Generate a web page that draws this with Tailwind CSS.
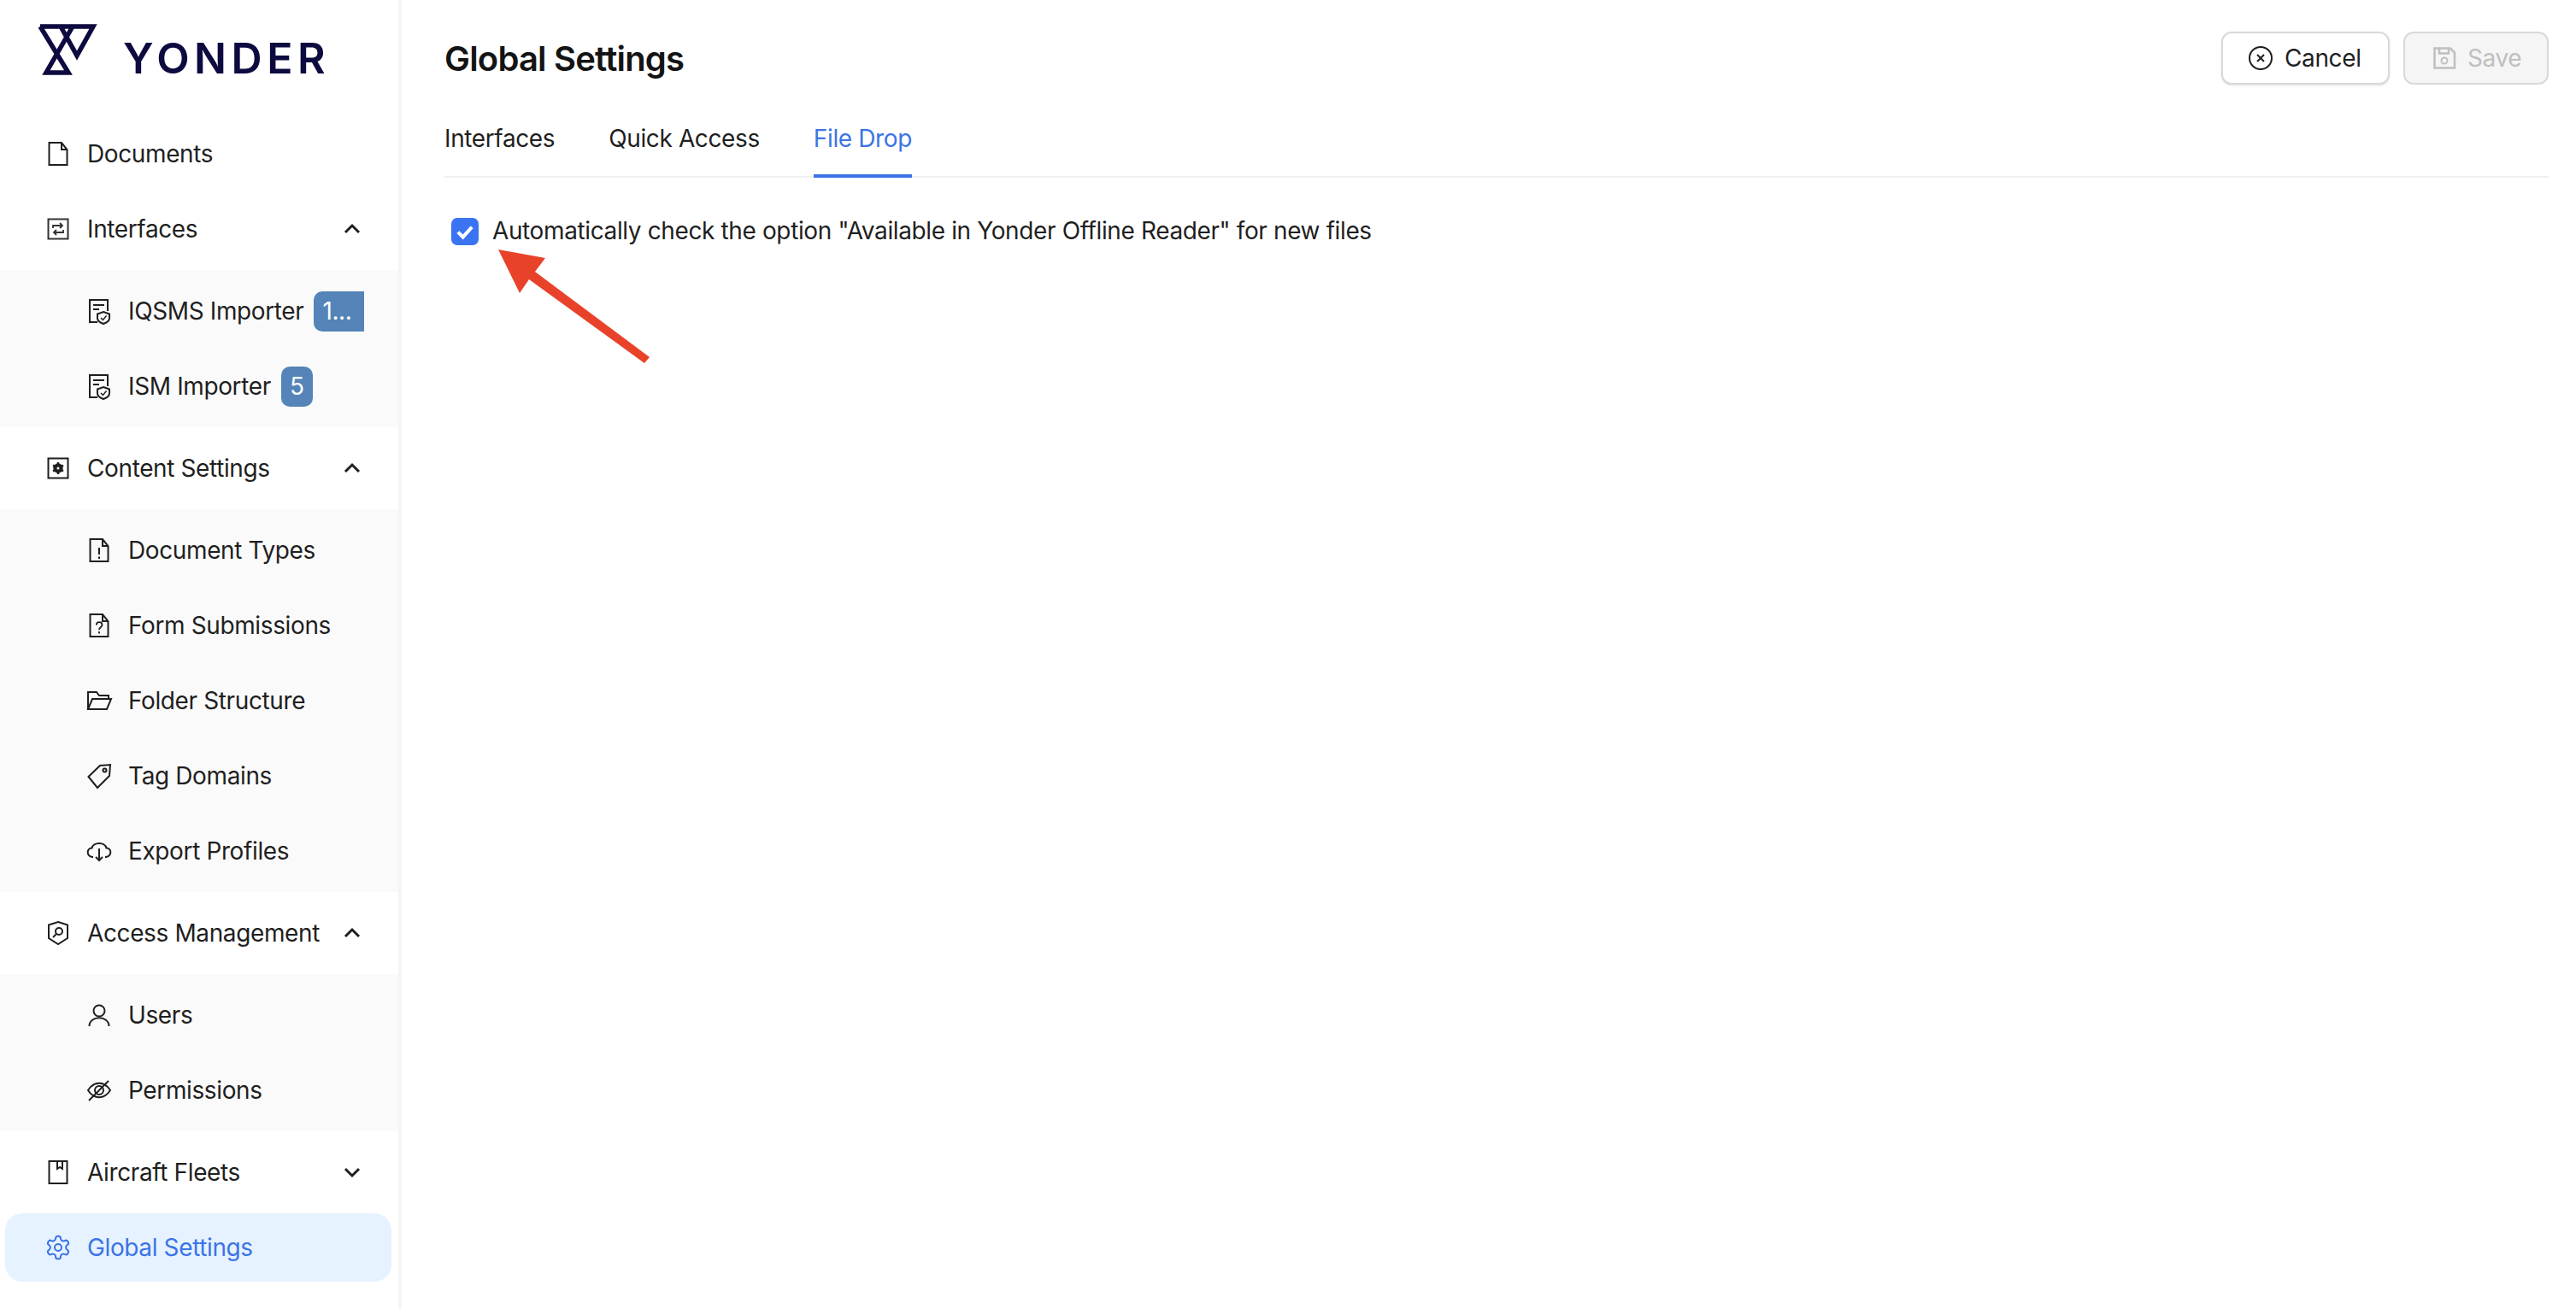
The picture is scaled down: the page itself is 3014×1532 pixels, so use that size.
<!DOCTYPE html>
<html lang="en">
<head>
  <meta charset="UTF-8" />
  <title>Global Settings</title>
  <script src="https://cdn.jsdelivr.net/npm/@tailwindcss/browser@4"></script>
</head>
<body class="bg-white font-[Inter,sans-serif] text-[28px] tracking-[-0.38px] text-[#1f1f1f]">
  <div class="relative flex h-[1532px] w-[3014px] overflow-hidden">

    <!-- sidebar -->
    <aside class="w-[470px] shrink-0 border-r-4 border-[#f5f5f5]">
      <div class="flex h-[140px] items-start pl-[44px] pt-[28px]">
        <svg class="h-[60px] w-[70px]" viewBox="0 0 70 60" fill="none" stroke="#0c0a3e" stroke-width="5.500">
          <path d="M3 3H65L46 37L27 3" />
          <path d="M3 3L36 57H10L41 3" />
        </svg>
        <span class="ml-[30px] mt-[15px] text-[50px] leading-[50px] font-semibold tracking-[5.500px] text-[#0c0a3e]">YONDER</span>
      </div>

      <nav class="flex flex-col gap-2">
        <a class="flex h-20 items-center pl-[52px]">
          <svg class="mr-[18px] size-8" viewBox="0 0 32 32" fill="none" stroke="#1f1f1f" stroke-width="2"><path d="M5.5 3H20l6.5 8v18h-21z" /><path d="M20 3v8h6.5" /></svg>
          Documents
        </a>

        <a class="flex h-20 items-center pl-[52px] pr-[40px]">
          <svg class="mr-[18px] size-8" viewBox="0 0 32 32" fill="none" stroke="#333" stroke-width="2"><rect x="4.5" y="4.500" width="23" height="23" /><path d="M10 15v-3h11M18 9l3 3-3 3M22 17v3H11M14 23l-3-3 3-3" stroke-width="1.800" /></svg>
          Interfaces
          <svg class="ml-auto size-7" viewBox="0 0 28 28" fill="none" stroke="#1f1f1f" stroke-width="3"><path d="M6 18l8-8 8 8" /></svg>
        </a>

        <div class="flex flex-col gap-2 bg-[#fafafa] py-2">
          <a class="flex h-20 items-center pl-[100px] pr-[40px]">
            <svg class="mr-[18px] size-8 shrink-0" viewBox="0 0 32 32" fill="none" stroke="#1f1f1f" stroke-width="2"><path d="M14 29H5V3h21v13" /><path d="M9 9h13M9 14h7" /><path d="M21 17l7 2.500v5c0 3-3 5-7 6.500-4-1.500-7-3.500-7-6.500v-5z" fill="#fafafa" /><path d="M18 24l2.500 2.500 4-5" stroke-width="1.500" /></svg>
            <span class="whitespace-nowrap">IQSMS Importer</span>
            <span class="ml-3 flex h-[47px] w-[59px] shrink-0 items-center rounded-l-[10px] bg-[#5484b8] pl-[10px] text-white">1...</span>
          </a>
          <a class="flex h-20 items-center pl-[100px]">
            <svg class="mr-[18px] size-8 shrink-0" viewBox="0 0 32 32" fill="none" stroke="#1f1f1f" stroke-width="2"><path d="M14 29H5V3h21v13" /><path d="M9 9h13M9 14h7" /><path d="M21 17l7 2.500v5c0 3-3 5-7 6.500-4-1.500-7-3.500-7-6.500v-5z" fill="#fafafa" /><path d="M18 24l2.500 2.500 4-5" stroke-width="1.500" /></svg>
            <span class="whitespace-nowrap">ISM Importer</span>
            <span class="ml-3 flex h-[47px] w-[37px] shrink-0 items-center justify-center rounded-[10px] bg-[#5484b8] text-white">5</span>
          </a>
        </div>

        <a class="flex h-20 items-center pl-[52px] pr-[40px]">
          <svg class="mr-[18px] size-8" viewBox="0 0 32 32" fill="none" stroke="#1f1f1f" stroke-width="2"><rect x="4.500" y="4.500" width="23" height="23" /><circle cx="16" cy="16" r="4" stroke-width="3.500" /><path d="M16 9v14M10 12.500l12 7M22 12.500l-12 7" stroke-width="2.500" /><circle cx="16" cy="16" r="1.500" fill="#fff" stroke="none" /></svg>
          Content Settings
          <svg class="ml-auto size-7" viewBox="0 0 28 28" fill="none" stroke="#1f1f1f" stroke-width="3"><path d="M6 18l8-8 8 8" /></svg>
        </a>

        <div class="flex flex-col gap-2 bg-[#fafafa] py-2">
          <a class="flex h-20 items-center pl-[100px]">
            <svg class="mr-[18px] size-8" viewBox="0 0 32 32" fill="none" stroke="#1f1f1f" stroke-width="2"><path d="M5.500 3H20l6.500 8v18h-21z" /><path d="M20 3v8h6.500" /><path d="M16 13v8M16 23.500v2.500" /></svg>
            Document Types
          </a>
          <a class="flex h-20 items-center pl-[100px]">
            <svg class="mr-[18px] size-8" viewBox="0 0 32 32" fill="none" stroke="#1f1f1f" stroke-width="2"><path d="M5.500 3H20l6.500 8v18h-21z" /><path d="M20 3v8h6.500" /><path d="M12.800 15.500c0-4.500 6.700-4.500 6.700 0 0 2.500-3.500 2.500-3.500 5.500M16 23v2.500" stroke-width="1.800" /></svg>
            Form Submissions
          </a>
          <a class="flex h-20 items-center pl-[100px]">
            <svg class="mr-[18px] size-8" viewBox="0 0 32 32" fill="none" stroke="#1f1f1f" stroke-width="2"><path d="M3 26V6h10l3 4h11v4" /><path d="M3 26h22l5-12H8z" /></svg>
            Folder Structure
          </a>
          <a class="flex h-20 items-center pl-[100px]">
            <svg class="mr-[18px] size-8" viewBox="0 0 32 32" fill="none" stroke="#1f1f1f" stroke-width="2"><path d="M3.500 17L17 4l12-1-1 13-14 14z" /><circle cx="22.500" cy="9.500" r="2" /></svg>
            Tag Domains
          </a>
          <a class="flex h-20 items-center pl-[100px]">
            <svg class="mr-[18px] size-8" viewBox="0 0 32 32" fill="none" stroke="#1f1f1f" stroke-width="2"><path d="M9 23H8C1 22 1 13 7.500 12.500 9 5 23 5 24.500 12.500 31 13 31 22 24 23h-1" /><path d="M16 13v14M12 23l4 4 4-4" /></svg>
            Export Profiles
          </a>
        </div>

        <a class="flex h-20 items-center pl-[52px] pr-[40px]">
          <svg class="mr-[18px] size-8" viewBox="0 0 32 32" fill="none" stroke="#1f1f1f" stroke-width="2"><path d="M16 3l11 3.500V22l-11 7-11-7V6.500z" /><circle cx="17" cy="14" r="4" /><path d="M14 17l-4 4" /></svg>
          Access Management
          <svg class="ml-auto size-7" viewBox="0 0 28 28" fill="none" stroke="#1f1f1f" stroke-width="3"><path d="M6 18l8-8 8 8" /></svg>
        </a>

        <div class="flex flex-col gap-2 bg-[#fafafa] py-2">
          <a class="flex h-20 items-center pl-[100px]">
            <svg class="mr-[18px] size-8" viewBox="0 0 32 32" fill="none" stroke="#1f1f1f" stroke-width="2"><circle cx="16" cy="11" r="6.500" /><path d="M4.500 29c0-13 23-13 23 0" /></svg>
            Users
          </a>
          <a class="flex h-20 items-center pl-[100px]">
            <svg class="mr-[18px] size-8" viewBox="0 0 32 32" fill="none" stroke="#1f1f1f" stroke-width="2"><path d="M3 16c7-11 19-11 26 0-7 11-19 11-26 0z" /><circle cx="16" cy="16" r="5" /><path d="M4 28L27 5" /></svg>
            Permissions
          </a>
        </div>

        <a class="flex h-20 items-center pl-[52px] pr-[40px]">
          <svg class="mr-[18px] size-8" viewBox="0 0 32 32" fill="none" stroke="#1f1f1f" stroke-width="2"><rect x="5.500" y="3" width="21" height="26" /><path d="M15 3v9l3-2 3 2V3" /></svg>
          Aircraft Fleets
          <svg class="ml-auto size-7" viewBox="0 0 28 28" fill="none" stroke="#1f1f1f" stroke-width="3"><path d="M6 10l8 8 8-8" /></svg>
        </a>

        <a class="ml-[6px] mr-2 flex h-20 items-center rounded-[20px] bg-[#e6f2ff] pl-[46px] text-[#3b74e6]">
          <svg class="mr-[18px] size-8" viewBox="0 0 24 24" fill="none" stroke="#3b74e6" stroke-width="1.500"><path d="M12.220 2h-.44a2 2 0 0 0-2 2v.18a2 2 0 0 1-1 1.730l-.43.250a2 2 0 0 1-2 0l-.15-.08a2 2 0 0 0-2.730.730l-.22.380a2 2 0 0 0 .730 2.730l.15.1a2 2 0 0 1 1 1.720v.510a2 2 0 0 1-1 1.740l-.15.090a2 2 0 0 0-.730 2.730l.22.380a2 2 0 0 0 2.730.730l.15-.08a2 2 0 0 1 2 0l.43.250a2 2 0 0 1 1 1.730V20a2 2 0 0 0 2 2h.44a2 2 0 0 0 2-2v-.18a2 2 0 0 1 1-1.730l.43-.25a2 2 0 0 1 2 0l.15.08a2 2 0 0 0 2.730-.73l.22-.39a2 2 0 0 0-.73-2.730l-.15-.08a2 2 0 0 1-1-1.740v-.5a2 2 0 0 1 1-1.740l.15-.09a2 2 0 0 0 .73-2.730l-.22-.38a2 2 0 0 0-2.730-.73l-.15.08a2 2 0 0 1-2 0l-.43-.25a2 2 0 0 1-1-1.730V4a2 2 0 0 0-2-2z" /><circle cx="12" cy="12" r="3" /></svg>
          Global Settings
        </a>
      </nav>
    </aside>

    <!-- main -->
    <main class="min-w-0 flex-1 pl-[50px] pr-[32px] pt-[37px]">
      <div class="flex h-[62px] items-center justify-between">
        <h1 class="pt-[2px] text-[40px] font-semibold leading-[60px] tracking-[-0.8px] text-[#141414]">Global Settings</h1>
        <div class="flex gap-4">
          <button class="flex h-[62px] w-[197px] items-center gap-[12px] rounded-xl border-2 border-[#d9d9d9] bg-white pl-[28px] shadow-sm">
            <svg class="size-8" viewBox="0 0 32 32" fill="none" stroke="#1f1f1f" stroke-width="2"><circle cx="16" cy="16" r="13" /><path d="M12 12l8 8M20 12l-8 8" /></svg>
            Cancel
          </button>
          <button class="flex h-[62px] w-[170px] items-center gap-[11px] rounded-xl border-2 border-[#d9d9d9] bg-[#f5f5f5] pl-[30px] text-[#bfbfbf]">
            <svg class="size-8" viewBox="0 0 32 32" fill="none" stroke="#bfbfbf" stroke-width="2.500"><path d="M4.500 4.500H23l5 5v18H4.500z" /><path d="M10 4.500v6h11v-6" /><circle cx="16" cy="19" r="3.500" stroke-width="2" /></svg>
            Save
          </button>
        </div>
      </div>

      <div class="mt-[20px] flex h-[89px] gap-[63px] border-b-2 border-[#f0f0f0]">
        <a class="flex h-[89px] items-center border-b-4 border-transparent">Interfaces</a>
        <a class="flex h-[89px] items-center border-b-4 border-transparent">Quick Access</a>
        <a class="flex h-[89px] items-center border-b-4 border-[#3b74e6] text-[#3b74e6]">File Drop</a>
      </div>

      <label class="mt-[42px] flex items-center pl-2">
        <span class="flex size-8 items-center justify-center rounded-[7px] bg-[#3b74f2]">
          <svg class="size-7" viewBox="0 0 24 24" fill="none" stroke="#fff" stroke-width="3.500"><path d="M5 12.500l5 5 9-10" /></svg>
        </span>
        <span class="ml-4 -translate-y-[1px]">Automatically check the option "Available in Yonder Offline Reader" for new files</span>
      </label>
    </main>

    <!-- annotation arrow -->
    <svg class="absolute left-0 top-0 h-[1532px] w-[3014px]" viewBox="0 0 3014 1532">
      <polygon points="583,292 638,302 626,318 760,418 754,425 619,327 608,343" fill="#e8432a" />
    </svg>
  </div>
</body>
</html>
